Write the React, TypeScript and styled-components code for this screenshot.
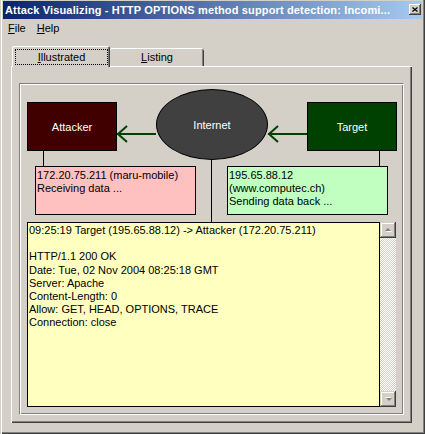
import React from 'react';
import styled, { createGlobalStyle } from 'styled-components';

const Global = createGlobalStyle`
  html, body { margin: 0; padding: 0; background: #d4d0c8; }
  body { font-family: "Liberation Sans", Arial, sans-serif; font-size: 11px; color: #000; }
  * { box-sizing: border-box; }
`;

const Window = styled.div`
  width: 425px;
  height: 434px;
  padding: 1px 3px 3px 3px;
  background: #d4d0c8;
  display: flex;
  flex-direction: column;
  box-shadow: inset 1px 0 #d4d0c8, inset 2px 0 #fff, inset -1px -1px #404040, inset -2px -2px #808080;
`;

const TitleBar = styled.div`
  height: 18px;
  display: flex;
  align-items: center;
  padding: 0 1px 0 2px;
  background: linear-gradient(to right, #0a246a, #a6caf0);
`;

const Title = styled.span`
  flex: 1;
  color: #fff;
  font-weight: bold;
  font-size: 11px;
  letter-spacing: 0.15px;
  white-space: nowrap;
  overflow: hidden;
`;

const CloseButton = styled.div`
  width: 12px;
  height: 11px;
  margin-bottom: 1px;
  background: #d4d0c8;
  display: flex;
  align-items: center;
  justify-content: center;
  box-shadow: inset -1px -1px #404040, inset 1px 1px #fff, inset -2px -2px #808080;
`;

const MenuBar = styled.div`
  height: 19px;
  display: flex;
  align-items: center;
`;

const MenuItem = styled.span`
  padding: 0 6px 0 5px;
  line-height: 19px;
`;

const TabStrip = styled.div`
  display: flex;
  align-items: flex-end;
  height: 21px;
  margin: 8px 0 -1px 9px;
  position: relative;
  z-index: 1;
`;

const Tab = styled.div<{ $active?: boolean; $w: number }>`
  width: ${(p) => p.$w}px;
  height: ${(p) => (p.$active ? 21 : 18)}px;
  margin-bottom: ${(p) => (p.$active ? 0 : 1)}px;
  background: #d4d0c8;
  display: flex;
  border-radius: 2px 2px 0 0;
  box-shadow: ${(p) =>
    p.$active
      ? 'inset 1px 1px #fff, inset -1px 0 #404040, inset -2px 0 #808080'
      : 'inset 0 1px #fff, inset -1px 0 #404040, inset -2px 0 #808080'};
`;

const TabLabel = styled.span<{ $focus?: boolean }>`
  flex: 1;
  display: flex;
  align-items: center;
  justify-content: center;
  margin: ${(p) => (p.$focus ? '3px 2px 2px 3px' : '0')};
  border: ${(p) => (p.$focus ? '1px dotted #000' : 'none')};
`;

const Panel = styled.div`
  margin-left: 8px;
  width: 401px;
  height: 357px;
  padding: 17px 0 0 8px;
  box-shadow: inset 1px 1px #fff, inset -1px -1px #404040, inset -2px -2px #808080;
`;

const Frame = styled.div`
  position: relative;
  width: 385px;
  height: 332px;
  border-style: solid;
  border-width: 1px;
  border-color: #808080 #fff #fff #808080;
  box-shadow: inset 1px 1px #fff, inset -1px -1px #808080;
  padding-top: 5px;
  display: flex;
  flex-direction: column;
`;

const Wires = styled.svg`
  position: absolute;
  left: 0;
  top: 0;
  width: 383px;
  height: 330px;
`;

const NodeRow = styled.div<{ $left: number; $gap: number; $top?: number }>`
  position: relative;
  display: flex;
  align-items: flex-start;
  padding-left: ${(p) => p.$left}px;
  gap: ${(p) => p.$gap}px;
  margin-top: ${(p) => p.$top ?? 0}px;
`;

const HostNode = styled.div<{ $fill: string }>`
  width: 90px;
  height: 49px;
  margin-top: 13px;
  background: ${(p) => p.$fill};
  border: 1px solid #000;
  color: #fff;
  display: flex;
  align-items: center;
  justify-content: center;
`;

const CloudNode = styled.div`
  width: 112px;
  height: 71px;
  border-radius: 50%;
  background: #404040;
  border: 1px solid #000;
  color: #fff;
  display: flex;
  align-items: center;
  justify-content: center;
`;

const InfoBox = styled.div<{ $fill: string }>`
  width: 161px;
  height: 49px;
  background: ${(p) => p.$fill};
  border: 1px solid #000;
  padding: 2px 1px;
  line-height: 13px;
  white-space: pre;
`;

const LogBox = styled.div`
  width: 353px;
  height: 185px;
  background: #ffffc0;
  border: 1px solid #000;
  padding: 1px 1px;
  line-height: 13.2px;
  white-space: pre;
`;

const ScrollBar = styled.div`
  width: 16px;
  height: 185px;
  display: flex;
  flex-direction: column;
`;

const ScrollTrack = styled.div`
  flex: 1;
  background: repeating-conic-gradient(#d4d0c8 0 25%, #fff 0 50%) 0 0 / 2px 2px;
`;

const ScrollButton = styled.div`
  width: 16px;
  height: 16px;
  background: #d4d0c8;
  display: flex;
  align-items: center;
  justify-content: center;
  box-shadow: inset -1px -1px #404040, inset 1px 1px #d4d0c8, inset -2px -2px #808080, inset 2px 2px #fff;
`;

const Arrow = ({ down }: { down?: boolean }) => (
  <svg width="9" height="6" viewBox="0 0 9 6">
    <g transform={down ? 'rotate(180 4.5 3)' : undefined}>
      <polygon points="2,5 5,2 8,5" fill="#fff" />
      <polygon points="1,4 4,1 7,4" fill="#808080" />
    </g>
  </svg>
);

const logLines = [
  '09:25:19 Target (195.65.88.12) -> Attacker (172.20.75.211)',
  '',
  'HTTP/1.1 200 OK',
  'Date: Tue, 02 Nov 2004 08:25:18 GMT',
  'Server: Apache',
  'Content-Length: 0',
  'Allow: GET, HEAD, OPTIONS, TRACE',
  'Connection: close',
];

export default function App() {
  return (
    <>
      <Global />
      <Window>
        <TitleBar>
          <Title>Attack Visualizing - HTTP OPTIONS method support detection: Incomi...</Title>
          <CloseButton>
            <svg width="6" height="5" viewBox="0 0 6 5">
              <path d="M0.5 0.5 L5.5 4.5 M5.5 0.5 L0.5 4.5" stroke="#000" strokeWidth="1.2" />
            </svg>
          </CloseButton>
        </TitleBar>
        <MenuBar>
          <MenuItem><u>F</u>ile</MenuItem>
          <MenuItem><u>H</u>elp</MenuItem>
        </MenuBar>
        <TabStrip>
          <Tab $active $w={98}>
            <TabLabel $focus><u>I</u>llustrated</TabLabel>
          </Tab>
          <Tab $w={94}>
            <TabLabel><u>L</u>isting</TabLabel>
          </Tab>
        </TabStrip>
        <Panel>
          <Frame>
            <Wires viewBox="0 0 383 330">
              <g stroke="#000" strokeWidth="1">
                <line x1="23.5" y1="67" x2="23.5" y2="82" />
                <line x1="359.5" y1="67" x2="359.5" y2="82" />
                <line x1="191.5" y1="76" x2="191.5" y2="138" />
              </g>
              <g stroke="#004000" strokeWidth="2" fill="none">
                <line x1="97" y1="50" x2="136" y2="50" />
                <polyline points="107,42 98,50 107,58" />
                <line x1="248" y1="50" x2="287" y2="50" />
                <polyline points="258,42 249,50 258,58" />
              </g>
            </Wires>
            <NodeRow $left={7} $gap={39}>
              <HostNode $fill="#400000">Attacker</HostNode>
              <CloudNode>Internet</CloudNode>
              <HostNode $fill="#004000">Target</HostNode>
            </NodeRow>
            <NodeRow $left={15} $gap={31} $top={6}>
              <InfoBox $fill="#ffc0c0">{'172.20.75.211 (maru-mobile)\nReceiving data ...'}</InfoBox>
              <InfoBox $fill="#c0ffc0">{'195.65.88.12\n(www.computec.ch)\nSending data back ...'}</InfoBox>
            </NodeRow>
            <NodeRow $left={7} $gap={0} $top={7}>
              <LogBox>{logLines.join('\n')}</LogBox>
              <ScrollBar>
                <ScrollButton><Arrow /></ScrollButton>
                <ScrollTrack />
                <ScrollButton><Arrow down /></ScrollButton>
              </ScrollBar>
            </NodeRow>
          </Frame>
        </Panel>
      </Window>
    </>
  );
}
